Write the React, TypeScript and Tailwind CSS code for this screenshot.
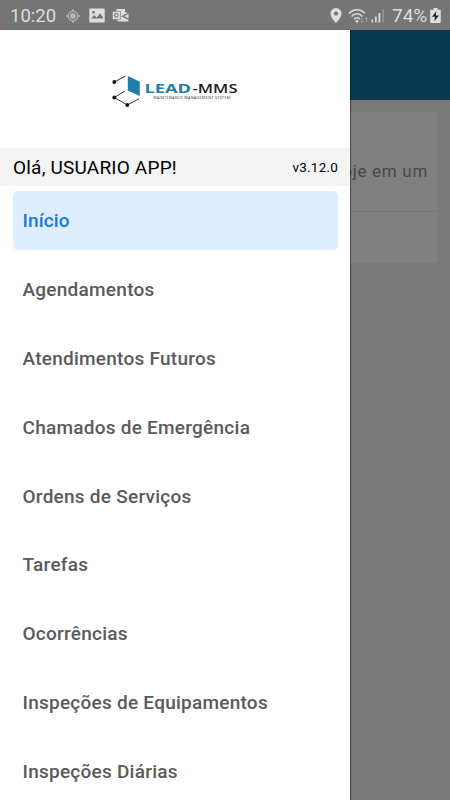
import { clsx } from "clsx";

const menuItems = [
  "Início",
  "Agendamentos",
  "Atendimentos Futuros",
  "Chamados de Emergência",
  "Ordens de Serviços",
  "Tarefas",
  "Ocorrências",
  "Inspeções de Equipamentos",
  "Inspeções Diárias",
];

function StatusBar() {
  return (
    <header className="flex h-[30px] shrink-0 items-center justify-between bg-[#757575] pt-px pr-[9px] pl-[10px] text-[#dedede]">
      <div className="flex items-center">
        <span className="w-[56px] pt-px text-[18.5px] leading-[29px]">10:20</span>
        <svg className="h-[14px] w-[14px] text-[#b4b4b4]" viewBox="0 0 14 14" fill="none" stroke="currentColor">
          <circle cx="7" cy="7" r="4.8" strokeWidth="1.2" />
          <circle cx="7" cy="7" r="3" fill="currentColor" stroke="none" />
          <path d="M7 0v2.5M7 11.5V14M0 7h2.5M11.5 7H14" strokeWidth="1.5" />
        </svg>
        <svg className="ml-[9px] h-[15px] w-4" viewBox="0 0 16 15">
          <rect x="0.3" y="0.6" width="15.4" height="13.8" rx="0.8" fill="currentColor" />
          <path d="M2.3 10.5 5.2 7l2.6 2.4L11 5.2l3 4v1.3z" fill="#757575" />
          <circle cx="4.5" cy="4.2" r="1.3" fill="#757575" />
        </svg>
        <svg className="ml-[7px] h-[15px] w-[17px]" viewBox="0 0 17 15">
          <path d="M4.5 1H13v3.2l3.5.8v8.5H7L4.5 12z" fill="currentColor" />
          <rect x="0.3" y="3.3" width="8" height="8" fill="currentColor" stroke="#757575" strokeWidth=".6" />
          <circle cx="4.3" cy="7.3" r="1.8" fill="none" stroke="#757575" strokeWidth="1.2" />
          <path d="m17 5-6.5 3.2 6.5 3.3" fill="none" stroke="#757575" strokeWidth="1.3" />
        </svg>
      </div>
      <div className="flex items-center">
        <svg className="h-[15px] w-3" viewBox="0 0 12 15">
          <path d="M6 0a5.6 5.6 0 0 0-5.6 5.6C.4 9.8 6 15 6 15s5.6-5.2 5.6-9.4A5.6 5.6 0 0 0 6 0z" fill="currentColor" />
          <circle cx="6" cy="5.5" r="2.1" fill="#757575" />
        </svg>
        <svg className="ml-[6px] h-4 w-[21px]" viewBox="0 0 21 16" fill="none" stroke="currentColor">
          <path d="M1 5.6c4.5-5 11.5-5 16 0M3.6 8.400c3-3.400 7.800-3.400 10.800 0M6 11.200c1.700-2 4.300-2 6 0" strokeWidth="1.5" />
          <circle cx="9" cy="13.3" r="1.4" fill="currentColor" stroke="none" />
          <path d="M14 9.5v5m-1.500-1.500 1.500 1.500 1.500-1.500M18.500 14.500v-5m-1.500 1.500 1.500-1.500 1.500 1.500" stroke="#a0a0a0" />
        </svg>
        <svg className="ml-[2px] h-[15px] w-[14px]" viewBox="0 0 14 15" fill="currentColor">
          <path d="M.5 11.5H2v3H.5zM4 8.5h1.700v6H4zM7.600 5h1.700v9.500H7.600z" />
          <path d="M11.300 1H13v13.500h-1.700z" fill="#929292" />
        </svg>
        <span className="ml-[7px] w-[38px] text-[19px] leading-[29px]">74%</span>
        <svg className="h-[15px] w-[11px]" viewBox="0 0 11 15">
          <path d="M3.500 0h4v1.700h2.300q1 0 1 1V14q0 1-1 1H1.200q-1 0-1-1V2.700q0-1 1-1h2.300z" fill="currentColor" />
          <path d="M6.300 3.200 2 8.800h3l-.7 4.400L9 7.500H5.800z" fill="#222" />
        </svg>
      </div>
    </header>
  );
}

function Logo() {
  return (
    <svg className="h-9 w-[130px] font-['Open_Sans',sans-serif]" viewBox="0 0 130 36">
      <path d="M4.3 10 15.5 4M15 19 4.3 25.5 17.3 33 29 26.8" fill="none" stroke="#333" strokeWidth="1" />
      <path d="M17.8 4 29.8 9.8V24L17.8 18.5z" fill="#1f7dab" />
      <circle cx="4.3" cy="10" r="1.9" fill="#111" />
      <circle cx="4.3" cy="25.5" r="1.9" fill="#111" />
      <circle cx="17.3" cy="33" r="1.9" fill="#111" />
      <text x="34.5" y="20.5" textLength="46.5" lengthAdjust="spacingAndGlyphs" fontWeight="700" fontSize="12.5" fill="#1f7dab">
        LEAD
      </text>
      <text x="82.5" y="20.5" textLength="45" lengthAdjust="spacingAndGlyphs" fontWeight="600" fontSize="12.5" fill="#1c1c1c">
        -MMS
      </text>
      <text x="43.3" y="27" textLength="77" fontSize="3.8" fill="#333">
        MAINTENANCE MANAGEMENT SYSTEM
      </text>
    </svg>
  );
}

function Drawer() {
  return (
    <aside className="absolute top-[30px] bottom-0 left-0 w-[350px] overflow-hidden bg-white shadow-[1px_0_1px_rgba(0,0,0,0.35)]">
      <div className="flex h-[118px] items-center justify-center pt-[2px]">
        <Logo />
      </div>
      <div className="flex h-[38px] items-center justify-between bg-[#f4f4f4] pr-3 pl-[13px] text-black">
        <span className="pt-[2px] text-[19px] tracking-[0.2px]">Olá, USUARIO APP!</span>
        <span className="pt-px text-[13.5px] tracking-[0.2px]">v3.12.0</span>
      </div>
      <nav className="flex flex-col gap-[10px] px-[12.5px] pt-[5px]">
        {menuItems.map((item, index) => (
          <a
            key={item}
            className={clsx(
              "flex h-[58.8px] shrink-0 items-center rounded-[5px] pt-[2.5px] pl-[10px] text-[19px] font-medium",
              index === 0
                ? "bg-[#dfeeff] tracking-[0.1px] text-[#127bdd]"
                : "tracking-[0.25px] text-[#5a5a5a]"
            )}
          >
            {item}
          </a>
        ))}
      </nav>
    </aside>
  );
}

export default function App() {
  return (
    <div className="relative flex h-[800px] w-[450px] flex-col overflow-hidden bg-[#797979] font-['Roboto',sans-serif]">
      <StatusBar />
      <div className="h-[70px] shrink-0 bg-[#0b3a50]" />
      <main className="px-3 pt-3">
        <section className="flex h-[151px] flex-col bg-[#808080] text-[#484848]">
          <p className="flex h-[100px] justify-end border-b border-[#757575] pt-[47px] pr-[10px] text-[17px] tracking-[0.7px]">
            oje em um
          </p>
        </section>
      </main>
      <Drawer />
    </div>
  );
}
